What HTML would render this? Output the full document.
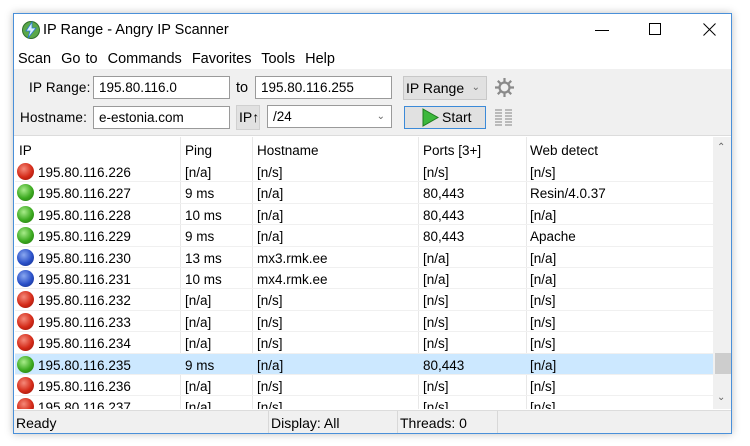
<!DOCTYPE html>
<html><head><style>
*{margin:0;padding:0;box-sizing:border-box}
body{width:750px;height:446px;background:#fff;font-family:"Liberation Sans",sans-serif;font-size:13px;color:#000;position:relative;overflow:hidden}
.a{position:absolute;white-space:nowrap}
.win{left:13px;top:13px;width:719px;height:421px;border:1px solid #4a90d9;background:#fff;box-shadow:0 0 8px rgba(0,0,0,.25)}
.inp{position:absolute;background:#fff;border:1px solid #9a9a9a;height:23px;line-height:21px;padding-left:5px;font-size:13.5px}
.row{position:absolute;left:15px;width:698px;height:21.4px;border-bottom:1px solid #f0f0f0}
.row span{position:absolute;top:4px;font-size:13.5px}
.dot{position:absolute;left:2px;top:2px;width:17px;height:17px;border-radius:50%}
.r{background:radial-gradient(circle at 40% 35%,#f58a7a,#d42a18 55%,#8a1008)}
.g{background:radial-gradient(circle at 40% 35%,#a8ec8a,#3caa20 55%,#1f6e0c)}
.b{background:radial-gradient(circle at 40% 35%,#8aa8f0,#2a50c8 55%,#122a80)}
.hd{position:absolute;top:143px;font-size:13.5px}
.vl{position:absolute;top:137px;width:1px;height:272px;background:#e8e8e8}
</style></head><body>
<div class="a win"></div>
<svg class="a" style="left:21px;top:20px" width="20" height="20" viewBox="0 0 20 20"><circle cx="10" cy="10" r="8.5" fill="#5aa84a" stroke="#2e6e2a"/><path d="M11 2 L5 11 L9 11 L7 18 L15 8 L11 8 Z" fill="#d8f0ff" stroke="#2a7ad0" stroke-width=".8"/></svg>
<div class="a" style="left:43px;top:22px;font-size:14.5px">IP Range - Angry IP Scanner</div>
<div class="a" style="left:595px;top:30px;width:14px;height:1px;background:#000"></div>
<div class="a" style="left:649px;top:23px;width:12px;height:12px;border:1px solid #000"></div>
<svg class="a" style="left:703px;top:23px" width="13" height="13"><path d="M0.5 0.5L12.5 12.5M12.5 0.5L0.5 12.5" stroke="#000"/></svg>
<div class="a" style="left:18px;top:51px;font-size:14.5px;word-spacing:1px">Scan&nbsp; Go to&nbsp; Commands&nbsp; Favorites&nbsp; Tools&nbsp; Help</div>
<div class="a" style="left:14px;top:69px;width:717px;height:67px;background:#f0f0f0;border-bottom:1px solid #dcdcdc"></div>
<div class="a" style="left:29px;top:80px;font-size:13.5px;letter-spacing:.2px">IP Range:</div>
<div class="inp" style="left:93px;top:76px;width:137px">195.80.116.0</div>
<div class="a" style="left:236px;top:80px;font-size:14.5px">to</div>
<div class="inp" style="left:255px;top:76px;width:137px">195.80.116.255</div>
<div class="a" style="left:403px;top:76px;width:84px;height:24px;background:#e1e1e1;border:1px solid #c8c8c8;line-height:22px;padding-left:2px;font-size:14px">IP Range <span style="position:absolute;right:6px;font-size:10px;color:#666">&#8964;</span></div>
<svg class="a" style="left:494px;top:77px" width="21" height="21" viewBox="0 0 21 21"><g fill="none" stroke="#8a8a8a" stroke-width="2.2"><circle cx="10.5" cy="10.5" r="5"/><path d="M10.5 1v4M10.5 16v4M1 10.5h4M16 10.5h4M3.8 3.8l2.8 2.8M14.4 14.4l2.8 2.8M3.8 17.2l2.8-2.8M14.4 6.6l2.8-2.8"/></g></svg>
<div class="a" style="left:20px;top:110px;font-size:13.5px;letter-spacing:.2px">Hostname:</div>
<div class="inp" style="left:93px;top:106px;width:137px">e-estonia.com</div>
<div class="a" style="left:236px;top:105px;width:24px;height:25px;background:#e1e1e1;border:1px solid #d0d0d0;line-height:23px;padding-left:2px;font-size:14px">IP↑</div>
<div class="inp" style="left:267px;top:105px;width:125px">/24<span style="position:absolute;right:6px;font-size:10px;color:#666">&#8964;</span></div>
<div class="a" style="left:404px;top:106px;width:82px;height:23px;background:#e1e1e1;border:1px solid #3c8ad8"></div>
<svg class="a" style="left:422px;top:108px" width="17" height="19"><path d="M1 1L16 9.5L1 18Z" fill="#3cb83c" stroke="#1e7a1e"/></svg>
<div class="a" style="left:442px;top:109px;font-size:14px">Start</div>
<svg class="a" style="left:495px;top:108px" width="17" height="18"><g stroke="#999" stroke-width="1.2"><path d="M0 2h7M0 5h7M0 8h7M0 11h7M0 14h7M0 17h7M10 2h7M10 5h7M10 8h7M10 11h7M10 14h7M10 17h7"/></g></svg>
<div class="vl" style="left:180px"></div><div class="vl" style="left:252px"></div><div class="vl" style="left:418px"></div><div class="vl" style="left:526px"></div>
<div class="hd" style="left:19px">IP</div><div class="hd" style="left:185px">Ping</div><div class="hd" style="left:257px">Hostname</div><div class="hd" style="left:423px">Ports [3+]</div><div class="hd" style="left:530px">Web detect</div>
<div class="a" style="left:713px;top:137px;width:18px;height:272px;background:#f0f0f0"></div>
<div class="a" style="left:717px;top:142px;font-size:10px;color:#666">&#8963;</div>
<div class="a" style="left:717px;top:392px;font-size:10px;color:#666">&#8964;</div>
<div class="a" style="left:715px;top:353px;width:16px;height:21px;background:#cdcdcd"></div>
<div style="position:absolute;left:0;top:0;width:750px;height:409px;overflow:hidden">
<div class="row" style="top:161px"><i class="dot r"></i><span style="left:23px">195.80.116.226</span><span style="left:170px">[n/a]</span><span style="left:242px">[n/s]</span><span style="left:408px">[n/s]</span><span style="left:515px">[n/s]</span></div>
<div class="row" style="top:182.4px"><i class="dot g"></i><span style="left:23px">195.80.116.227</span><span style="left:170px">9 ms</span><span style="left:242px">[n/a]</span><span style="left:408px">80,443</span><span style="left:515px">Resin/4.0.37</span></div>
<div class="row" style="top:203.8px"><i class="dot g"></i><span style="left:23px">195.80.116.228</span><span style="left:170px">10 ms</span><span style="left:242px">[n/a]</span><span style="left:408px">80,443</span><span style="left:515px">[n/a]</span></div>
<div class="row" style="top:225.2px"><i class="dot g"></i><span style="left:23px">195.80.116.229</span><span style="left:170px">9 ms</span><span style="left:242px">[n/a]</span><span style="left:408px">80,443</span><span style="left:515px">Apache</span></div>
<div class="row" style="top:246.6px"><i class="dot b"></i><span style="left:23px">195.80.116.230</span><span style="left:170px">13 ms</span><span style="left:242px">mx3.rmk.ee</span><span style="left:408px">[n/a]</span><span style="left:515px">[n/a]</span></div>
<div class="row" style="top:268px"><i class="dot b"></i><span style="left:23px">195.80.116.231</span><span style="left:170px">10 ms</span><span style="left:242px">mx4.rmk.ee</span><span style="left:408px">[n/a]</span><span style="left:515px">[n/a]</span></div>
<div class="row" style="top:289.4px"><i class="dot r"></i><span style="left:23px">195.80.116.232</span><span style="left:170px">[n/a]</span><span style="left:242px">[n/s]</span><span style="left:408px">[n/s]</span><span style="left:515px">[n/s]</span></div>
<div class="row" style="top:310.8px"><i class="dot r"></i><span style="left:23px">195.80.116.233</span><span style="left:170px">[n/a]</span><span style="left:242px">[n/s]</span><span style="left:408px">[n/s]</span><span style="left:515px">[n/s]</span></div>
<div class="row" style="top:332.2px"><i class="dot r"></i><span style="left:23px">195.80.116.234</span><span style="left:170px">[n/a]</span><span style="left:242px">[n/s]</span><span style="left:408px">[n/s]</span><span style="left:515px">[n/s]</span></div>
<div class="row" style="top:353.6px;background:#cce8ff"><i class="dot g"></i><span style="left:23px">195.80.116.235</span><span style="left:170px">9 ms</span><span style="left:242px">[n/a]</span><span style="left:408px">80,443</span><span style="left:515px">[n/a]</span></div>
<div class="row" style="top:375px"><i class="dot r"></i><span style="left:23px">195.80.116.236</span><span style="left:170px">[n/a]</span><span style="left:242px">[n/s]</span><span style="left:408px">[n/s]</span><span style="left:515px">[n/s]</span></div>
<div class="row" style="top:396.4px"><i class="dot r"></i><span style="left:23px">195.80.116.237</span><span style="left:170px">[n/a]</span><span style="left:242px">[n/s]</span><span style="left:408px">[n/s]</span><span style="left:515px">[n/s]</span></div>
</div>
<div class="a" style="left:14px;top:410px;width:717px;height:23px;background:#f0f0f0;border-top:1px solid #dcdcdc"></div>
<div class="a" style="left:268px;top:411px;width:1px;height:22px;background:#d8d8d8"></div>
<div class="a" style="left:397px;top:411px;width:1px;height:22px;background:#d8d8d8"></div>
<div class="a" style="left:497px;top:411px;width:1px;height:22px;background:#d8d8d8"></div>
<div class="a" style="left:16px;top:415px;font-size:14px">Ready</div>
<div class="a" style="left:271px;top:415px;font-size:14px">Display: All</div>
<div class="a" style="left:400px;top:415px;font-size:14px">Threads: 0</div>
</body></html>
